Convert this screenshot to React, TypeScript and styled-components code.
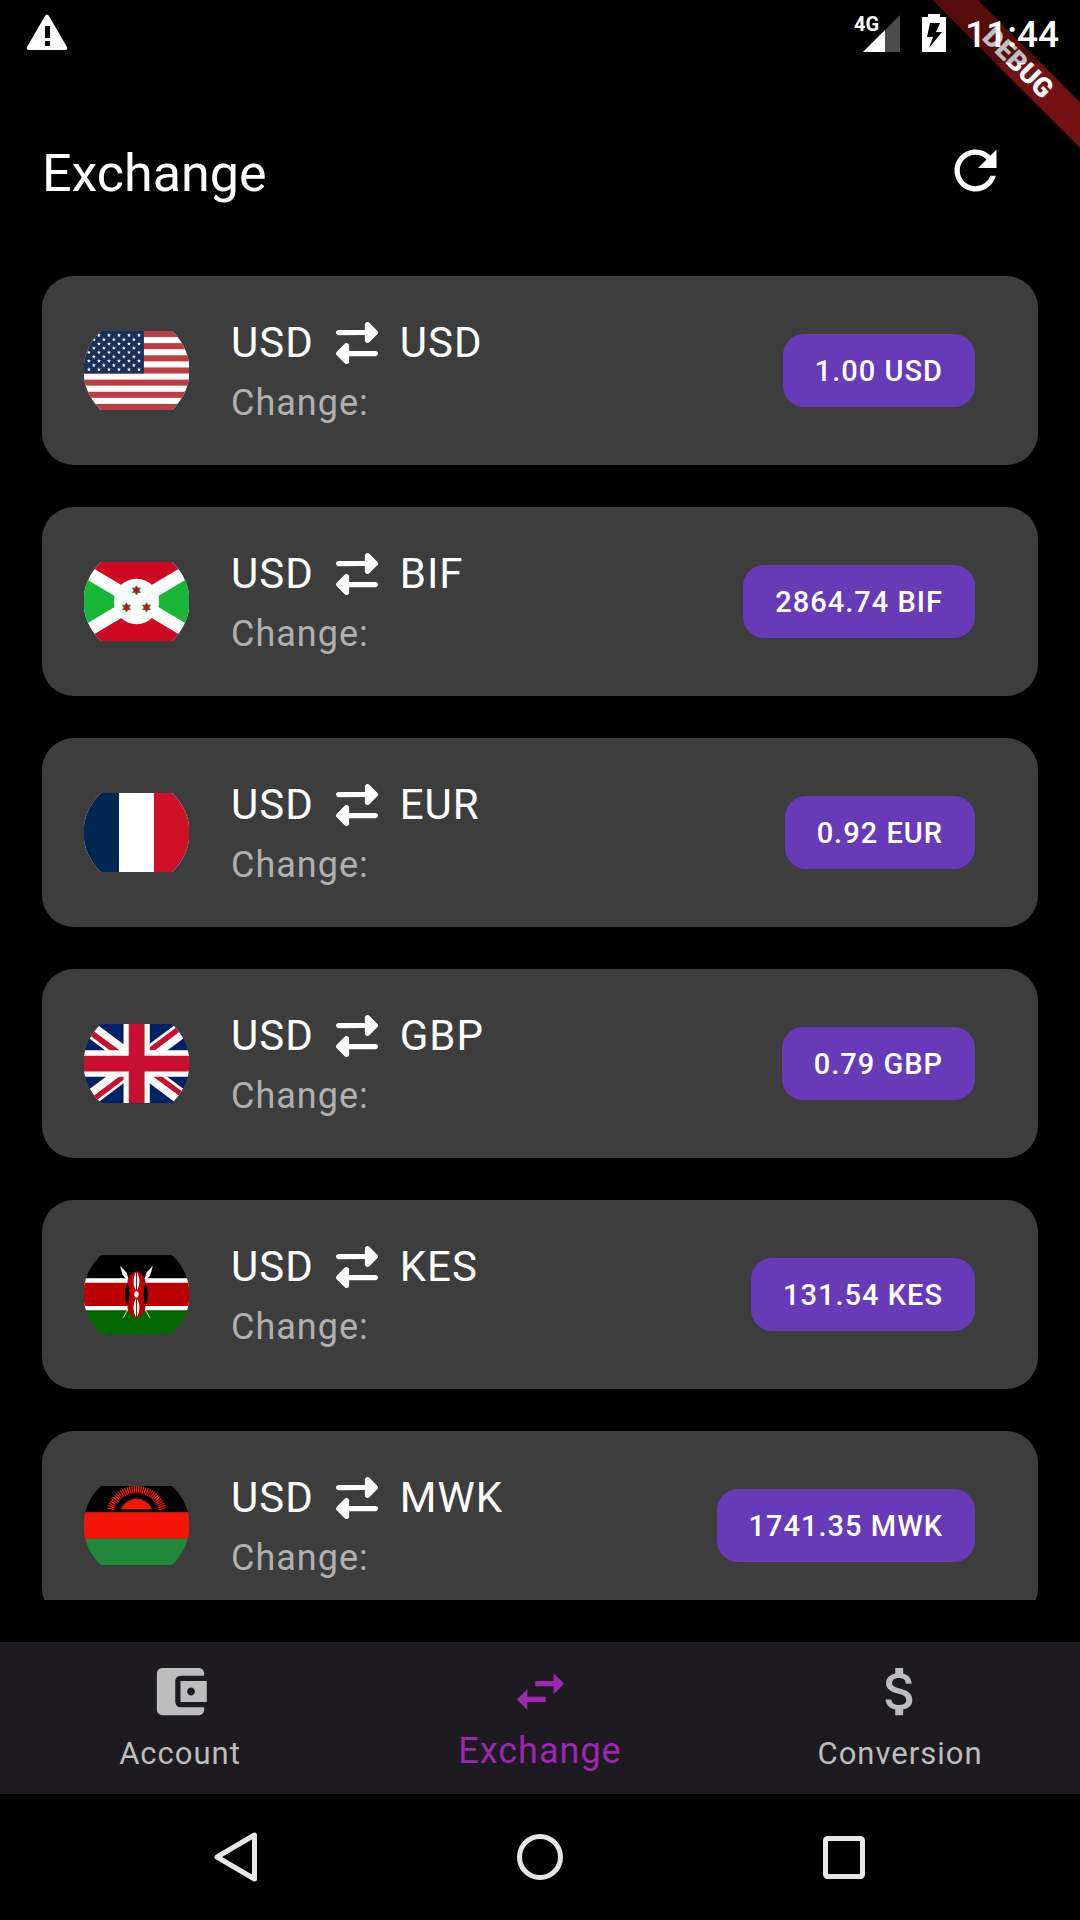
import React from "react";
import styled, { createGlobalStyle } from "styled-components";
import { FaRightLeft } from "react-icons/fa6";
import {
  MdAccountBalanceWallet,
  MdAttachMoney,
  MdRefresh,
  MdSwapHoriz,
} from "react-icons/md";

const color = {
  page: "#000000",
  card: "#3d3d3d",
  nav: "#1d1b20",
  accent: "#673ab7",
  active: "#9c27b0",
  muted: "#b0b0b0",
  idle: "#bdbdbd",
  text: "#ffffff",
  system: "#e6e6e6",
};

const GlobalStyle = createGlobalStyle`
  * { box-sizing: border-box; }
  body {
    margin: 0;
    background: ${color.page};
    color: ${color.text};
    font-family: Roboto, "Noto Sans", sans-serif;
  }
  button { font: inherit; color: inherit; background: none; border: 0; padding: 0; cursor: pointer; }
  ul { list-style: none; margin: 0; padding: 0; }
  svg { display: block; flex: none; }
`;

const Screen = styled.div`
  position: relative;
  display: flex;
  flex-direction: column;
  height: 100vh;
  overflow: hidden;
`;

const StatusBar = styled.header`
  position: relative;
  z-index: 2;
  display: flex;
  flex: none;
  justify-content: space-between;
  height: 63px;
  padding: 13px 21px 0 26px;
  background: rgba(0, 0, 0, 0.25);
`;

const StatusGroup = styled.div`
  display: flex;
  align-items: flex-start;
`;

const Signal = styled.div`
  display: flex;
  align-items: flex-start;
  margin-right: 21px;
`;

const NetworkType = styled.span`
  margin-right: -16px;
  font-size: 20px;
  font-weight: 700;
  line-height: 22px;
`;

const Clock = styled.time`
  margin-left: 18px;
  font-size: 37px;
  font-weight: 500;
  line-height: 43px;
`;

const DebugCorner = styled.div`
  position: absolute;
  z-index: 1;
  top: 0;
  right: 0;
  width: 150px;
  height: 150px;
  overflow: hidden;
  pointer-events: none;
`;

const DebugStrip = styled.div`
  position: absolute;
  top: 47px;
  right: -58px;
  width: 240px;
  background: rgba(183, 28, 28, 0.63);
  font-size: 27px;
  font-weight: 900;
  line-height: 32px;
  text-align: center;
  transform: rotate(45deg);
`;

const AppBar = styled.div`
  display: flex;
  flex: none;
  align-items: flex-start;
  justify-content: space-between;
  padding: 76px 73px 68px 42px;
`;

const Title = styled.h1`
  margin: 0;
  font-size: 52px;
  font-weight: 400;
  line-height: 69px;
`;

const RateList = styled.ul`
  display: flex;
  flex: 1;
  flex-direction: column;
  gap: 42px;
  min-height: 0;
  margin: 0 42px 42px;
  overflow: hidden;
`;

const RateCard = styled.li`
  display: flex;
  flex: none;
  align-items: center;
  gap: 42px;
  padding: 40px 63px 40px 42px;
  border-radius: 32px;
  background: ${color.card};
`;

const Flag = styled.svg`
  width: 105px;
  height: 79px;
  clip-path: circle(53px);
`;

const RateText = styled.div`
  display: flex;
  flex: 1;
  flex-direction: column;
  gap: 13px;
  padding-top: 2px;
`;

const Pair = styled.div`
  display: flex;
  align-items: center;
  gap: 22px;
  font-size: 42px;
  line-height: 50px;
  letter-spacing: 1px;
`;

const Change = styled.div`
  color: ${color.muted};
  font-size: 36px;
  line-height: 44px;
  letter-spacing: 1px;
`;

const RateButton = styled.button`
  padding: 2px 32px 0;
  border-radius: 21px;
  background: ${color.accent};
  font-size: 29px;
  font-weight: 500;
  line-height: 71px;
  letter-spacing: 1px;
`;

const BottomNav = styled.nav`
  display: grid;
  flex: none;
  grid-template-columns: repeat(3, 1fr);
  height: 152px;
  background: ${color.nav};
`;

const Tab = styled.button<{ $active?: boolean }>`
  display: flex;
  flex-direction: column;
  align-items: center;
  gap: 10px;
  padding-top: 18px;
  color: ${(p) => (p.$active ? color.active : color.idle)};
  font-size: ${(p) => (p.$active ? 36 : 31)}px;
  line-height: ${(p) => (p.$active ? 36 : 42)}px;
  letter-spacing: 1px;
`;

const SystemNav = styled.div`
  display: grid;
  flex: none;
  grid-template-columns: repeat(3, 1fr);
  height: 126px;
  padding: 0 84px;
`;

const SystemButton = styled.button`
  display: flex;
  align-items: center;
  justify-content: center;
  color: ${color.system};
`;

function starPoints(cx: number, cy: number, points: number, outer: number, inner: number) {
  return Array.from({ length: points * 2 }, (_, i) => {
    const r = i % 2 ? inner : outer;
    const a = (Math.PI * i) / points - Math.PI / 2;
    return `${(cx + r * Math.cos(a)).toFixed(1)},${(cy + r * Math.sin(a)).toFixed(1)}`;
  }).join(" ");
}

const usStars = Array.from({ length: 9 }, (_, row) =>
  Array.from({ length: row % 2 ? 5 : 6 }, (_, col) => ({
    x: 30 + col * 61 + (row % 2 ? 30 : 0),
    y: 26 + row * 26,
  }))
).flat();

function UsFlag() {
  return (
    <>
      <path fill="#fff" d="M0 0h640v480H0z" />
      {Array.from({ length: 7 }, (_, i) => (
        <rect key={i} y={(i * 960) / 13} width="640" height={480 / 13} fill="#bd3d44" />
      ))}
      <path fill="#192f5d" d="M0 0h365v258.500H0z" />
      {usStars.map((s) => (
        <polygon key={`${s.x}-${s.y}`} fill="#fff" points={starPoints(s.x, s.y, 5, 13, 5.5)} />
      ))}
    </>
  );
}

function BurundiFlag() {
  return (
    <>
      <path fill="#fff" d="M0 0h640v480H0z" />
      <path fill="#cf0921" d="M0 0v5l320 190L640 5V0zM0 480v-5l320-190 320 190v5z" />
      <path fill="#18b637" d="M0 95l244 145L0 385zM640 95L396 240l244 145z" />
      <circle cx="320" cy="240" r="138" fill="#fff" />
      {[[320, 172], [259, 276], [381, 276]].map(([x, y]) => (
        <polygon
          key={x}
          points={starPoints(x, y, 6, 28, 16)}
          fill="#cf0921"
          stroke="#18903a"
          strokeWidth="5"
        />
      ))}
    </>
  );
}

function FranceFlag() {
  return (
    <>
      <path fill="#fff" d="M0 0h640v480H0z" />
      <path fill="#002654" d="M0 0h213.300v480H0z" />
      <path fill="#ce1126" d="M426.700 0H640v480H426.700z" />
    </>
  );
}

function UkFlag() {
  return (
    <>
      <path fill="#012169" d="M0 0h640v480H0z" />
      <path fill="#fff" d="m75 0 244 181L562 0h78v62L400 241l240 178v61h-80L320 301 81 480H0v-60l239-178L0 64V0h75z" />
      <path fill="#c8102e" d="m424 281 216 159v40L369 281h55zm-184 20 6 35L54 480H0l240-179zM640 0v3L391 191l2-44L590 0h50zM0 0l239 176h-60L0 42V0z" />
      <path fill="#fff" d="M241 0v480h160V0H241zM0 160v160h640V160H0z" />
      <path fill="#c8102e" d="M0 193v96h640v-96H0zM273 0v480h96V0h-96z" />
    </>
  );
}

function Spear() {
  return (
    <>
      <path stroke="#ddd" strokeWidth="6" d="M255 130L402 382" />
      <path fill="#fff" d="M220 66l40 42 12 42-16-4-20-24z" />
    </>
  );
}

function KenyaFlag() {
  return (
    <>
      <path d="M0 0h640v144H0z" />
      <path fill="#fff" d="M0 142h640v196H0z" />
      <path fill="#b00" d="M0 168h640v142H0z" />
      <path fill="#060" d="M0 336h640v144H0z" />
      <Spear />
      <g transform="translate(640 0) scale(-1 1)">
        <Spear />
      </g>
      <path d="M268 164c-24 44-24 106 0 150h104c24-44 24-106 0-150z" />
      <path fill="#b00" d="M320 97c32 14 53 38 55 64q-22 78 0 158c-2 26-23 48-55 62-32-14-53-36-55-62q22-80 0-158c2-26 23-50 55-64z" />
      <path fill="#fff" d="M317 103c-20 36-20 82 0 113zM323 103c20 36 20 82 0 113zM317 377c-20-36-20-82 0-113zM323 377c20-36 20-82 0-113z" />
      <ellipse cx="320" cy="240" rx="13" ry="19" fill="#fff" />
    </>
  );
}

function MalawiFlag() {
  return (
    <>
      <path d="M0 0h640v160H0z" />
      <path fill="#f41408" d="M0 160h640v160H0z" />
      <path fill="#21873b" d="M0 320h640v160H0z" />
      <path fill="#f41408" d="M224 142a104 104 0 0 1 192 0z" />
      <path
        fill="none"
        stroke="#f41408"
        strokeWidth="46"
        strokeDasharray="8 5"
        d="M162 142a164 164 0 0 1 316 0"
      />
    </>
  );
}

const rates = [
  { code: "USD", value: "1.00", Art: UsFlag, country: "United States" },
  { code: "BIF", value: "2864.74", Art: BurundiFlag, country: "Burundi" },
  { code: "EUR", value: "0.92", Art: FranceFlag, country: "France" },
  { code: "GBP", value: "0.79", Art: UkFlag, country: "United Kingdom" },
  { code: "KES", value: "131.54", Art: KenyaFlag, country: "Kenya" },
  { code: "MWK", value: "1741.35", Art: MalawiFlag, country: "Malawi" },
];

export default function App() {
  return (
    <Screen>
      <GlobalStyle />
      <StatusBar>
        <svg width="42" height="39" viewBox="0 0 42 39" aria-hidden="true">
          <path
            fill="#fff"
            fillRule="evenodd"
            d="M19 3q2-3 4 0l18 31q1 3-2 3H3q-3 0-2-3zM19 13v12h5V13zM19 28v5h5v-5z"
          />
        </svg>
        <StatusGroup>
          <Signal>
            <NetworkType>4G</NetworkType>
            <svg width="37" height="39" viewBox="0 0 37 39" aria-hidden="true">
              <path fill="#4d4d4d" d="M37 2v37H0z" />
              <path fill="#fff" d="M22 17v22H0z" />
            </svg>
          </Signal>
          <svg width="26" height="39" viewBox="0 0 26 39" aria-hidden="true">
            <path
              fill="#fff"
              fillRule="evenodd"
              d="M7 1h12v3h6v35H1V4h6zM9 10L6 24h6l-4 11 13-16h-6l4-9z"
            />
          </svg>
          <Clock>11:44</Clock>
        </StatusGroup>
      </StatusBar>
      <DebugCorner>
        <DebugStrip>DEBUG</DebugStrip>
      </DebugCorner>

      <AppBar>
        <Title>Exchange</Title>
        <button type="button" aria-label="Refresh">
          <MdRefresh size={63} />
        </button>
      </AppBar>

      <RateList>
        {rates.map(({ code, value, Art, country }) => (
          <RateCard key={code}>
            <Flag viewBox="0 0 640 480" preserveAspectRatio="none" role="img" aria-label={country}>
              <Art />
            </Flag>
            <RateText>
              <Pair>
                <span>USD</span>
                <FaRightLeft size={42} />
                <span>{code}</span>
              </Pair>
              <Change>Change:</Change>
            </RateText>
            <RateButton type="button">
              {value} {code}
            </RateButton>
          </RateCard>
        ))}
      </RateList>

      <BottomNav>
        <Tab type="button">
          <MdAccountBalanceWallet size={63} />
          Account
        </Tab>
        <Tab type="button" $active aria-current="page">
          <MdSwapHoriz size={63} />
          Exchange
        </Tab>
        <Tab type="button">
          <MdAttachMoney size={63} />
          Conversion
        </Tab>
      </BottomNav>

      <SystemNav>
        <SystemButton type="button" aria-label="Back">
          <svg width="44" height="50" viewBox="0 0 44 50" fill="none" stroke="currentColor" strokeWidth="5" strokeLinejoin="round">
            <path d="M40.500 3v44L3 25z" />
          </svg>
        </SystemButton>
        <SystemButton type="button" aria-label="Home">
          <svg width="48" height="48" viewBox="0 0 48 48" fill="none" stroke="currentColor" strokeWidth="5">
            <circle cx="24" cy="24" r="20.500" />
          </svg>
        </SystemButton>
        <SystemButton type="button" aria-label="Recent apps">
          <svg width="42" height="43" viewBox="0 0 42 43" fill="none" stroke="currentColor" strokeWidth="5">
            <rect x="2.500" y="2.500" width="37" height="38" rx="2" />
          </svg>
        </SystemButton>
      </SystemNav>
    </Screen>
  );
}
